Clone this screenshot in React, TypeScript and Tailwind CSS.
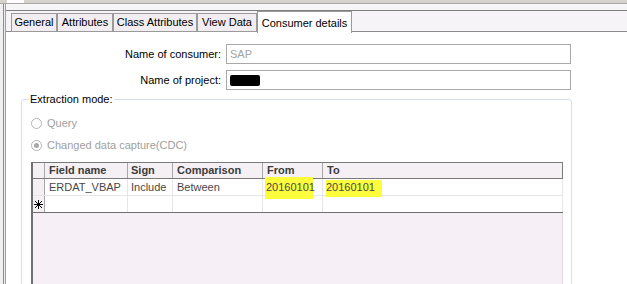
import React from "react";

function Star() {
  return (
    <svg width="9" height="9" viewBox="0 0 9 9" className="block">
      <g stroke="#000" strokeWidth="1.2" shapeRendering="crispEdges">
        <line x1="4.5" y1="0" x2="4.5" y2="9" />
        <line x1="0" y1="4.5" x2="9" y2="4.5" />
        <line x1="1.2" y1="1.2" x2="7.8" y2="7.8" />
        <line x1="7.8" y1="1.2" x2="1.2" y2="7.8" />
      </g>
    </svg>
  );
}

export default function App() {
  const tabs = [
    { label: "General", w: "w-[46px]" },
    { label: "Attributes", w: "w-[56px]" },
    { label: "Class Attributes", w: "w-[84px]" },
    { label: "View Data", w: "w-[60px]" },
  ];
  return (
    <div className="w-[627px] h-[284px] overflow-hidden bg-white font-['Liberation_Sans',Arial,sans-serif] text-[11px] text-black flex flex-col">
      {/* top strip */}
      <div className="h-[3px] flex shrink-0">
        <div className="w-[7px] bg-[#d6d3ce]" />
        <div className="w-[17px] bg-white" />
        <div className="flex-1 bg-[#d6d3ce]" />
      </div>
      <div className="h-px bg-[#a8a8a8] shrink-0" />
      <div className="flex flex-1 min-h-0">
        {/* left edges */}
        <div className="w-[3px] bg-[#f0f0f0]" />
        <div className="w-px bg-[#8c8c8c]" />
        <div className="w-px bg-[#eeeeee]" />
        <div className="w-px bg-[#a0a0a0]" />
        <div className="flex-1 flex flex-col min-w-0">
          <div className="h-[6px] bg-[#f6f6f6] shrink-0" />
          <div className="h-px bg-[#7f7f7f] shrink-0" />
          {/* tab row */}
          <div className="h-[21px] flex items-end shrink-0 bg-[#f7f4f7]">
            <div className="w-[5px] h-full border-b border-[#8a8a8a]" />
            {tabs.map((t) => (
              <div
                key={t.label}
                className={`${t.w} h-[19px] border border-[#9a9a9a] bg-[#f1edf1] flex items-center justify-center whitespace-nowrap`}
              >
                {t.label}
              </div>
            ))}
            <div className="w-[95px] h-[22px] -mb-px border-l border-r border-t border-[#9a9a9a] bg-white flex items-start justify-center pt-[3px] whitespace-nowrap relative z-10">
              Consumer details
            </div>
            <div className="flex-1 h-full border-b border-[#8a8a8a]" />
          </div>
          {/* content */}
          <div className="flex-1 bg-white flex flex-col">
            <div className="mt-[12px] flex items-center h-[20px]">
              <div className="w-[220px] pr-[5px] text-right">Name of consumer:</div>
              <div className="w-[345px] h-[20px] border border-[#a9a9a9] flex items-center pl-[3px] text-[#a3a3a3]">
                SAP
              </div>
            </div>
            <div className="mt-[6px] flex items-center h-[20px]">
              <div className="w-[220px] pr-[5px] text-right">Name of project:</div>
              <div className="w-[345px] h-[20px] border border-[#a9a9a9] flex items-center pl-[3px]">
                <div className="w-[30px] h-[11px] bg-black rounded-[2px]" />
              </div>
            </div>
            <fieldset className="mt-[3px] ml-[15px] w-[551px] h-[220px] border border-[#d5dfe5] rounded-[3px]">
              <legend className="ml-[7px] px-[1px] leading-[13px]">Extraction mode:</legend>
              <div className="mt-[9px] ml-[9px] h-[16px] flex items-center text-[#a0a0a0]">
                <div className="w-[11px] h-[11px] rounded-full border border-[#b4b4b4] bg-white" />
                <span className="ml-[5px]">Query</span>
              </div>
              <div className="mt-[6px] ml-[9px] h-[16px] flex items-center text-[#a0a0a0]">
                <div className="w-[11px] h-[11px] rounded-full border border-[#b4b4b4] bg-white flex items-center justify-center">
                  <div className="w-[5px] h-[5px] rounded-full bg-[#a8a8a8]" />
                </div>
                <span className="ml-[5px]">Changed data capture(CDC)</span>
              </div>
              {/* grid */}
              <div className="mt-[9px] ml-[9px] w-[532px] h-[160px] border-l-2 border-[#707070] flex flex-col">
                <div className="h-[17px] shrink-0 flex border-t border-r border-b border-[#7a7a7a] bg-[#f4f0f4] font-bold text-[#3c3c3c]">
                  <div className="w-[12px] border-r border-[#a8a8a8]" />
                  <div className="w-[83px] border-r border-[#a8a8a8] pl-[4px] flex items-center">Field name</div>
                  <div className="w-[45px] border-r border-[#a8a8a8] pl-[3px] flex items-center">Sign</div>
                  <div className="w-[90px] border-r border-[#a8a8a8] pl-[4px] flex items-center">Comparison</div>
                  <div className="w-[60px] border-r border-[#a8a8a8] pl-[4px] flex items-center">From</div>
                  <div className="flex-1 pl-[4px] flex items-center">To</div>
                </div>
                <div className="h-[17px] shrink-0 flex border-b border-r border-[#e6e6e6] bg-white text-[#484848]">
                  <div className="w-[12px] border-r border-[#a8a8a8] bg-[#f4f0f4]" />
                  <div className="w-[83px] border-r border-[#e6e6e6] pl-[4px] flex items-center">ERDAT_VBAP</div>
                  <div className="w-[45px] border-r border-[#e6e6e6] pl-[3px] flex items-center">Include</div>
                  <div className="w-[90px] border-r border-[#e6e6e6] pl-[4px] flex items-center">Between</div>
                  <div className="w-[60px] border-r border-[#e6e6e6] pl-[3px] flex items-center relative">
                    <div className="absolute left-[2px] top-[-2px] w-[48px] h-[22px] bg-[#fdfd3c]" />
                    <span className="relative">20160101</span>
                  </div>
                  <div className="flex-1 pl-[3px] flex items-center relative">
                    <div className="absolute left-[3px] top-[1px] w-[56px] h-[17px] bg-[#fdfd3c]" />
                    <span className="relative">20160101</span>
                  </div>
                </div>
                <div className="h-[16px] shrink-0 flex border-r border-[#e6e6e6] bg-white">
                  <div className="w-[12px] border-r border-[#a8a8a8] bg-[#f4f0f4] flex items-center justify-center">
                    <Star />
                  </div>
                  <div className="w-[83px] border-r border-[#e6e6e6]" />
                  <div className="w-[45px] border-r border-[#e6e6e6]" />
                  <div className="w-[90px] border-r border-[#e6e6e6]" />
                  <div className="w-[60px] border-r border-[#e6e6e6]" />
                  <div className="flex-1" />
                </div>
                <div className="h-px shrink-0 bg-[#6e6e6e]" />
                <div className="flex-1 bg-[#f6f0f6] border-r border-[#e2dde2]" />
              </div>
            </fieldset>
          </div>
        </div>
      </div>
    </div>
  );
}
